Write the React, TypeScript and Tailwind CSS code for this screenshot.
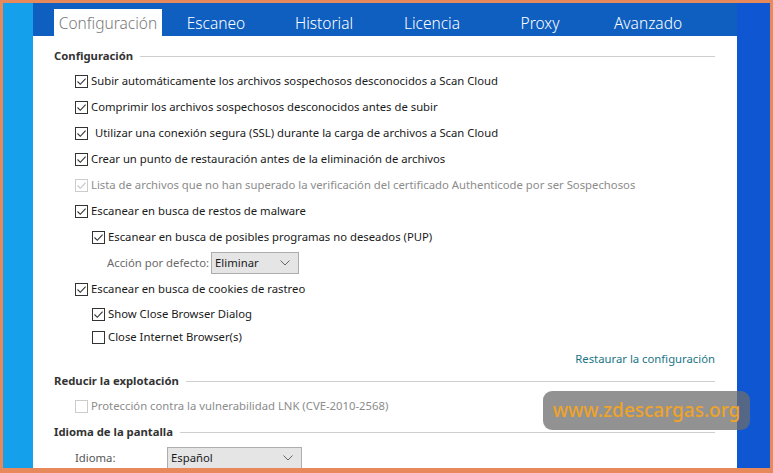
import { ReactNode } from "react";

const tabs = ["Configuración", "Escaneo", "Historial", "Licencia", "Proxy", "Avanzado"];

function Check({ checked, disabled }: { checked?: boolean; disabled?: boolean }) {
  return (
    <span
      className={`flex h-[13px] w-[13px] shrink-0 items-center justify-center border bg-white ${
        disabled ? "border-[#cccccc]" : "border-[#333333]"
      }`}
    >
      {checked && (
        <svg width="11" height="11" viewBox="0 0 11 11">
          <path
            d="M1.5 5.5 L4.3 8.3 L9.6 2.6"
            fill="none"
            stroke={disabled ? "#c4c4c4" : "#333333"}
            strokeWidth="1.1"
          />
        </svg>
      )}
    </span>
  );
}

function Row({
  children,
  checked,
  disabled,
  indent,
  h = "h-[26px]",
}: {
  children: ReactNode;
  checked?: boolean;
  disabled?: boolean;
  indent?: boolean;
  h?: string;
}) {
  return (
    <div className={`flex shrink-0 items-center gap-[3px] ${h} ${indent ? "pl-[38px]" : "pl-[21px]"}`}>
      <Check checked={checked} disabled={disabled} />
      <span className={disabled ? "text-[#8c8c8c]" : "text-[#1a1a1a]"}>{children}</span>
    </div>
  );
}

function Header({ title, h }: { title: string; h: string }) {
  return (
    <div className={`flex shrink-0 items-center gap-[7px] ${h}`}>
      <span className="font-bold text-[#333333]">{title}</span>
      <div className="h-px flex-1 bg-[#cfcfcf]" />
    </div>
  );
}

function Select({ value, w }: { value: string; w: string }) {
  return (
    <div
      className={`flex h-[22px] ${w} items-center justify-between border border-[#adadad] bg-[#e5e5e5] pl-[3px] pr-[8px] text-[#1a1a1a]`}
    >
      <span>{value}</span>
      <svg width="10" height="6" viewBox="0 0 10 6">
        <path d="M0.5 0.5 L5 5 L9.5 0.5" fill="none" stroke="#666" strokeWidth="1" />
      </svg>
    </div>
  );
}

export default function App() {
  return (
    <div
      className="relative flex h-[473px] w-[773px] bg-[#e8895b] pb-[5px] pl-[3px] pr-[3px] pt-[3px] text-[11.3px]"
      style={{ fontFamily: '"Noto Sans", "Open Sans", sans-serif' }}
    >
      {/* left strip */}
      <div className="w-[30px] bg-[#14a0ea]" />

      {/* main */}
      <div className="flex w-[704px] flex-col overflow-hidden">
        <div className="flex h-[33px] shrink-0 items-end bg-[#0f5fc0] pl-[21px]">
          {tabs.map((t, i) => (
            <div
              key={t}
              className={`flex h-[27px] w-[108px] items-center justify-center pt-[2px] text-[15.5px] font-light ${
                i === 0 ? "bg-white text-[#7a7a7a]" : "text-white"
              }`}
            >
              {t}
            </div>
          ))}
        </div>

        <div className="flex flex-1 flex-col bg-white pl-[21px] pr-[22px] pt-[8px]">
          <Header title="Configuración" h="h-[24px]" />
          <Row checked>Subir automáticamente los archivos sospechosos desconocidos a Scan Cloud</Row>
          <Row checked>Comprimir los archivos sospechosos desconocidos antes de subir</Row>
          <Row checked>
            <span className="pl-[4px]">Utilizar una conexión segura (SSL) durante la carga de archivos a Scan Cloud</span>
          </Row>
          <Row checked>Crear un punto de restauración antes de la eliminación de archivos</Row>
          <Row checked disabled>
            Lista de archivos que no han superado la verificación del certificado Authenticode por ser Sospechosos
          </Row>
          <Row checked>Escanear en busca de restos de malware</Row>
          <Row checked indent>
            Escanear en busca de posibles programas no deseados (PUP)
          </Row>
          <div className="flex h-[26px] shrink-0 items-center pl-[53px]">
            <span className="mr-[2px] text-[#6a6a6a]">Acción por defecto:</span>
            <Select value="Eliminar" w="w-[88px]" />
          </div>
          <Row checked>Escanear en busca de cookies de rastreo</Row>
          <Row checked indent h="h-[24px]">
            Show Close Browser Dialog
          </Row>
          <Row indent h="h-[22px]">
            Close Internet Browser(s)
          </Row>
          <div className="flex h-[22px] shrink-0 items-center justify-end">
            <span className="text-[#1a7585]">Restaurar la configuración</span>
          </div>
          <Header title="Reducir la explotación" h="h-[20px] mt-[1px]" />
          <Row disabled h="h-[26px] mt-[2px]">
            Protección contra la vulnerabilidad LNK (CVE-2010-2568)
          </Row>
          <Header title="Idioma de la pantalla" h="h-[26px]" />
          <div className="flex h-[26px] shrink-0 items-center pl-[21px]">
            <span className="w-[92px] text-[#555555]">Idioma:</span>
            <Select value="Español" w="w-[135px]" />
          </div>
        </div>
      </div>

      {/* right strip */}
      <div className="w-[33px] bg-[#0e56d2]" />

      {/* watermark */}
      <div className="absolute left-[543px] top-[391px] flex h-[39px] w-[207px] items-center justify-center rounded-[9px] bg-[#6e6e6e]/75 text-[19px] font-medium text-[#eea32a]">
        www.zdescargas.org
      </div>
    </div>
  );
}
